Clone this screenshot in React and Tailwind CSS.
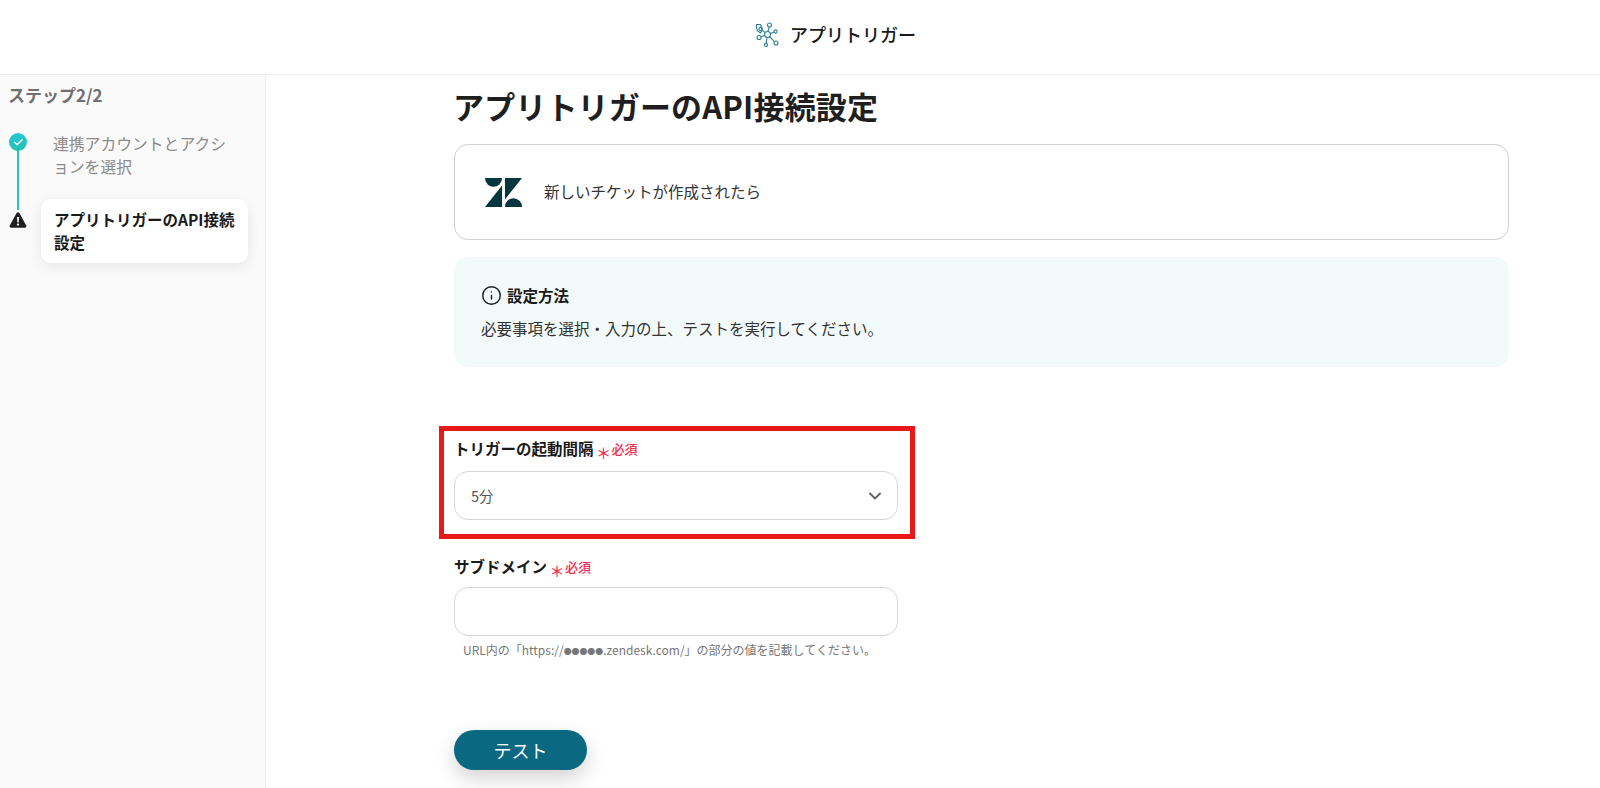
import React from "react";
import { ChevronDown, Info, Check } from "lucide-react";

const font = { fontFamily: '"Noto Sans CJK JP", "Noto Sans", sans-serif' };

function Logo() {
  return (
    <svg width="26" height="26" viewBox="0 0 26 26" fill="none" stroke="#2f7f95" strokeWidth="1.1">
      <circle cx="13.5" cy="12.5" r="3" />
      <circle cx="15.5" cy="3" r="2" />
      <circle cx="21.5" cy="9.5" r="1.6" />
      <circle cx="22" cy="21" r="2" />
      <circle cx="12" cy="23" r="1.6" />
      <circle cx="5" cy="15.5" r="2" />
      <circle cx="6.5" cy="7" r="1.6" />
      <path d="M2.5 2.5h4l2 5-2 3.5-3-2-1-3z" />
      <path d="M14 9.6 15.2 5M16.3 11.5 20 10M15.7 14.6 20.4 19.6M13 15.5 12.2 21.4M10.7 13.4 6.9 14.8M11.2 10.6 7.8 8" />
    </svg>
  );
}

function ZendeskLogo() {
  return (
    <svg width="37" height="29" viewBox="0 0 38 29" fill="#03363d" preserveAspectRatio="none">
      <path d="M17.5 7.6V29H0z" />
      <path d="M17.5 0a8.75 8.75 0 0 1-17.5 0z" />
      <path d="M20.5 29a8.75 8.75 0 0 1 17.5 0z" />
      <path d="M20.5 21.4V0H38z" />
    </svg>
  );
}

function Required() {
  return (
    <span className="ml-[3px] inline-flex items-center text-[13px] font-medium text-[#f52c50]">
      <span className="w-[14px] flex justify-center text-[15px] leading-none translate-y-[3px] font-medium">＊</span>
      <span className="ml-[1px]">必須</span>
    </span>
  );
}

export default function App() {
  return (
    <div style={font} className="h-[788px] w-[1600px] overflow-hidden bg-white text-[#1f1f1f] flex flex-col">
      <header className="h-[75px] shrink-0 border-b border-[#eeeeee] flex items-center justify-center pl-[70px]">
        <div className="flex items-center gap-[10px] -mt-[5px]">
          <Logo />
          <span className="text-[18px] font-medium text-[#1a1a1a]">アプリトリガー</span>
        </div>
      </header>
      <div className="flex flex-1 min-h-0">
        <aside className="w-[266px] shrink-0 bg-[#fafafa] border-r border-[#eeeeee] pl-[9px]">
          <div className="mt-[8px] -ml-[1px] text-[17px] leading-[24px] font-bold text-[#6f6f6f]">ステップ2/2</div>
          <div className="relative mt-[25px]">
            <div className="absolute left-[8px] top-[14px] h-[64px] w-[2px] bg-[#2bbcc8]" />
            <div className="flex">
              <div className="relative w-[18px] h-[18px] rounded-full bg-gradient-to-b from-[#2bc4d8] to-[#21c2b0] flex items-center justify-center mt-[1px]">
                <Check size={11} strokeWidth={3} color="#fff" />
              </div>
              <div className="ml-[26px] w-[180px] text-[15.8px] leading-[23px] text-[#8a8a8a]">連携アカウントとアクションを選択</div>
            </div>
            <div className="flex items-start mt-[21px]">
              <svg className="relative mt-[12px] w-[18px] h-[18px]" viewBox="0 0 18 18">
                <path d="M9 1.2c.6 0 1.1.3 1.4.8l6.8 12.6c.6 1-.2 2.2-1.4 2.2H2.2c-1.2 0-2-1.2-1.4-2.2L7.6 2c.3-.5.8-.8 1.4-.8z" fill="#1f1f1f" />
                <path d="M8 6h2l-.3 5.5H8.3z" fill="#fff" />
                <circle cx="9" cy="13.6" r="1.1" fill="#fff" />
              </svg>
              <div className="ml-[14px] w-[207px] h-[64px] rounded-[10px] bg-white shadow-[0_4px_14px_rgba(0,0,0,0.08)] pl-[13px] pr-[4px] py-[9px] text-[15.5px] leading-[23px] font-bold text-[#1a1a1a]">
                アプリトリガーのAPI接続設定
              </div>
            </div>
          </div>
        </aside>
        <main className="relative flex-1 pl-[188px]">
          <h1 className="mt-[9px] -ml-[1px] text-[31px] leading-[44px] font-bold text-[#1f1f1f] tracking-[0.005em]">アプリトリガーのAPI接続設定</h1>
          <div className="mt-[16px] w-[1055px] h-[96px] rounded-[14px] border border-[#cfcfcf] flex items-center pl-[30px]">
            <ZendeskLogo />
            <span className="ml-[22px] text-[15.5px] text-[#333]">新しいチケットが作成されたら</span>
          </div>
          <div className="mt-[17px] w-[1055px] h-[110px] rounded-[14px] bg-[#f3fafa] pl-[27px] pt-[26px]">
            <div className="flex items-center gap-[5px]">
              <Info size={21} strokeWidth={1.6} color="#1a1a1a" />
              <span className="text-[15.5px] leading-[24px] font-bold text-[#1a1a1a]">設定方法</span>
            </div>
            <div className="mt-[9px] text-[15.5px] leading-[24px] text-[#333]">必要事項を選択・入力の上、テストを実行してください。</div>
          </div>
          <div className="mt-[70px] w-[444px]">
            <div className="flex items-center h-[24px]">
              <span className="text-[15.5px] font-bold text-[#1a1a1a]">トリガーの起動間隔</span>
              <Required />
            </div>
            <div className="mt-[10px] h-[49px] rounded-[14px] border border-[#d5d8de] flex items-center justify-between pl-[16px] pr-[12px]">
              <span className="text-[14.5px] text-[#555]">5分</span>
              <ChevronDown size={20} strokeWidth={2.4} color="#666" />
            </div>
          </div>
          <div className="mt-[35px] w-[444px]">
            <div className="flex items-center h-[24px]">
              <span className="text-[15.5px] font-bold text-[#1a1a1a]">サブドメイン</span>
              <Required />
            </div>
            <div className="mt-[8px] h-[49px] rounded-[14px] border border-[#d5d8de]" />
            <div className="mt-[4px] pl-[9px] text-[12px] leading-[20px] text-[#777]">
              URL内の「https://<span className="text-[7.9px] relative -top-[0.5px]">●●●●●</span>.zendesk.com/」の部分の値を記載してください。
            </div>
          </div>
          <button className="mt-[68px] block w-[133px] h-[40px] rounded-full bg-[#0a6981] text-white text-[18px] shadow-[0_8px_20px_rgba(0,0,0,0.18)]">テスト</button>
          <div className="absolute left-[173px] top-[351px] w-[476px] h-[113px] border-[5px] border-[#e81818] pointer-events-none" />
        </main>
      </div>
    </div>
  );
}
